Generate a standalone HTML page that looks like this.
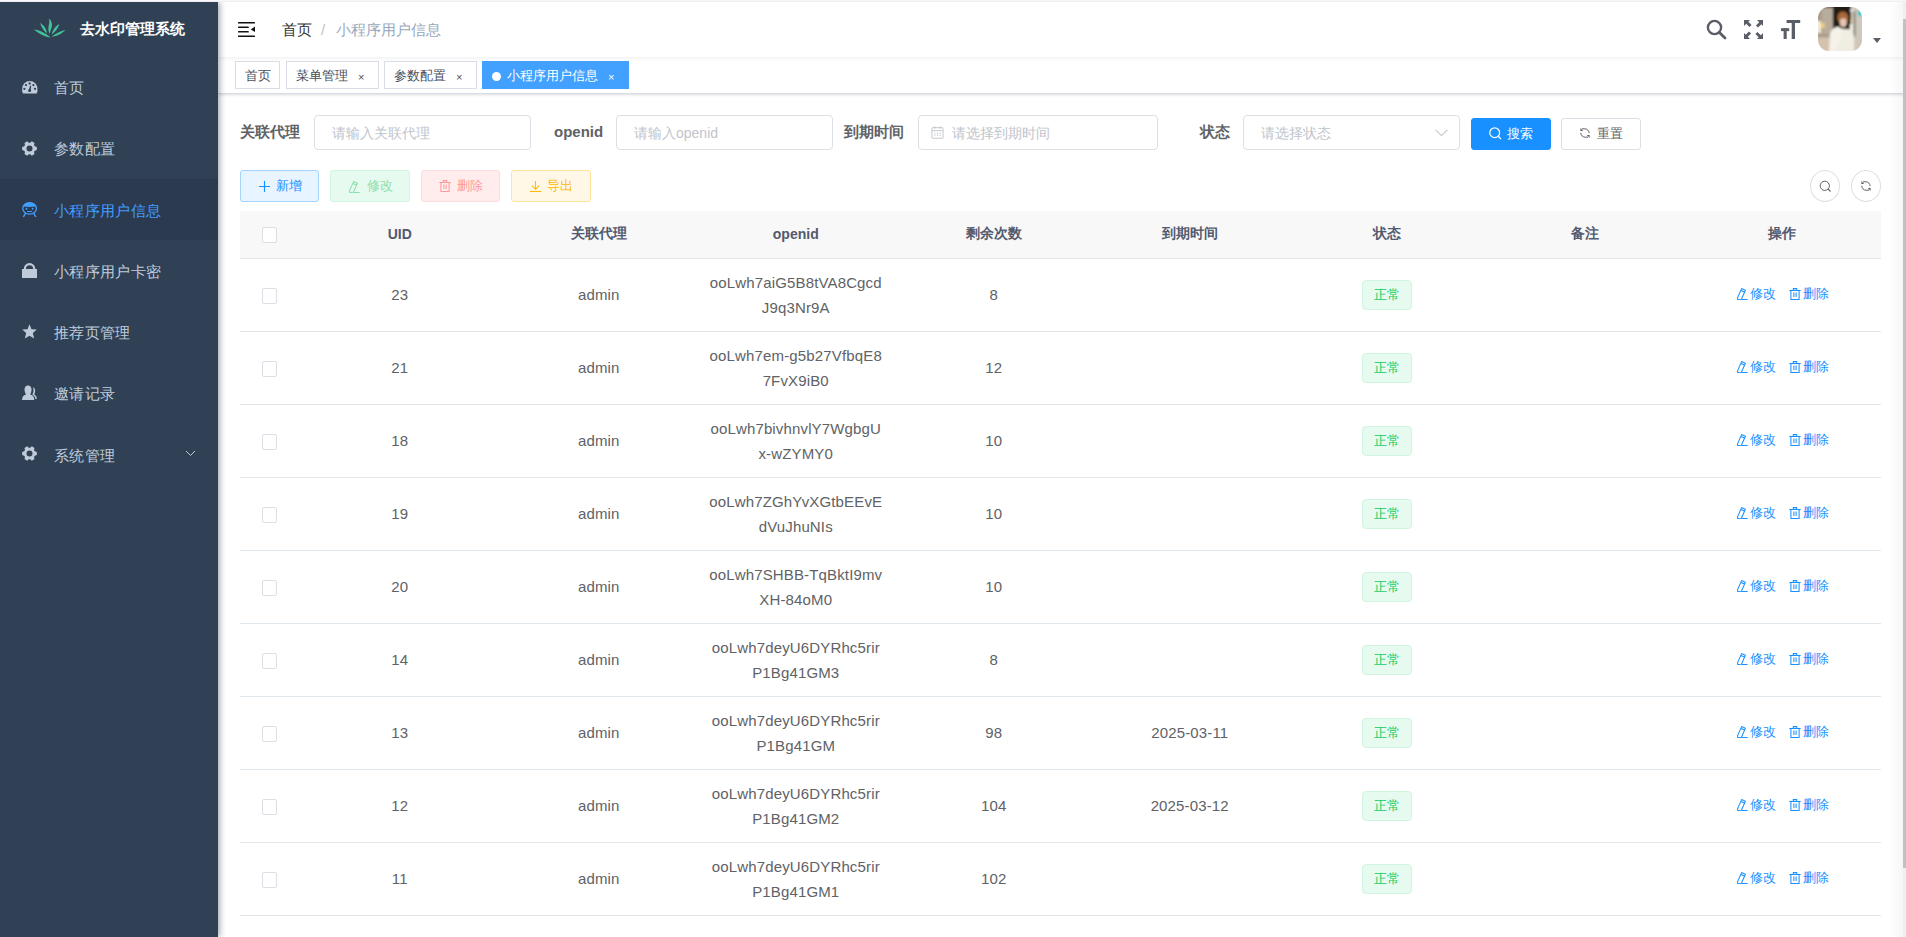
<!DOCTYPE html>
<html><head><meta charset="utf-8">
<style>
*{box-sizing:border-box;margin:0;padding:0}
html,body{width:1906px;height:937px;overflow:hidden;background:#fff;font-family:"Liberation Sans",sans-serif;color:#606266}
.abs{position:absolute}
svg{display:block}
#topstrip{left:0;top:0;width:1906px;height:2px;background:#f7f7f9;border-bottom:1px solid #f0f0f4;z-index:10}
#sidebar{left:0;top:2px;width:218px;height:935px;background:#304156;box-shadow:2px 0 6px rgba(0,21,41,.35);z-index:5}
#logo{left:34px;top:16px}
#title{left:80px;top:17px;font-size:15px;font-weight:bold;color:#fff;line-height:20px;white-space:nowrap}
.mi{position:absolute;left:0;width:218px;height:61px}
.mi.active{background:#2c3a50}
.mi svg{position:absolute;left:22px}
.mi .tx{position:absolute;left:54px;top:21.5px;font-size:15px;letter-spacing:.35px;line-height:20px;color:#bfcbd9;white-space:nowrap}
.mi.active .tx{color:#409eff}
#navbar{left:218px;top:2px;width:1688px;height:55px;background:#fff;box-shadow:0 1px 4px rgba(0,21,41,.08);z-index:3}
#tags{left:218px;top:57px;width:1688px;height:37px;background:#fff;border-bottom:1px solid #d8dce5;box-shadow:0 1px 3px 0 rgba(0,0,0,.12),0 0 3px 0 rgba(0,0,0,.04);z-index:2}
.tag{position:absolute;top:4px;height:28px;border:1px solid #d8dce5;background:#fff;color:#495060;font-size:13px;line-height:28px;padding-left:9px;white-space:nowrap}
.tag .x{position:absolute;top:1px;font-size:11px;line-height:28px;color:#495060}
.tag.on{background:#42a0ff;border-color:#42a0ff;color:#fff}
.tag.on .x{color:#fff}
.dot{position:absolute;left:9px;top:10px;width:9px;height:9px;border-radius:50%;background:#fff}
.bc{position:absolute;top:17.5px;font-size:15px;line-height:20px;white-space:nowrap}
.lbl{position:absolute;top:122px;font-size:15px;font-weight:bold;color:#606266;line-height:20px;white-space:nowrap}
.inp{position:absolute;top:115px;height:35px;border:1px solid #dcdfe6;border-radius:4px;background:#fff}
.ph{position:absolute;font-size:14px;color:#c0c4cc;line-height:20px;top:7px;white-space:nowrap}
.btn{position:absolute;height:32px;border-radius:3px;font-size:13px;line-height:30px;white-space:nowrap;border:1px solid}
.btn svg{position:absolute}
.btn span{position:absolute;top:0}
.circ{position:absolute;top:170px;width:30px;height:32px;border:1px solid #dcdfe6;border-radius:50%;background:#fff}
.circ svg{position:absolute;left:8px;top:9px}
table{position:absolute;left:240px;top:211px;width:1641px;border-collapse:collapse;table-layout:fixed}
th{height:47px;background:#f8f8f9;color:#515a6e;font-size:14px;font-weight:bold;border-bottom:1px solid #dfe6ec;text-align:center;padding:0}
td{height:73px;border-bottom:1px solid #dfe6ec;text-align:center;font-size:15px;letter-spacing:.15px;color:#606266;line-height:25px;padding:0}
th:nth-child(3),td:nth-child(3){padding-left:3px}th:nth-child(4),td:nth-child(4){padding-left:2px}th:nth-child(5),td:nth-child(5){padding-left:3px}
.cb{display:inline-block;width:15.5px;height:15.5px;border:1px solid #dcdfe6;border-radius:2px;background:#fff;vertical-align:middle;position:relative;left:-1px}
.st{display:inline-block;width:50px;height:30px;border:1px solid #d0f5de;background:#e7faf0;color:#13ce66;border-radius:4px;font-size:13px;line-height:28px;vertical-align:middle}
.op{color:#1890ff;font-size:13px;white-space:nowrap;position:relative;top:-1.5px;left:1px}
.op svg{display:inline-block;vertical-align:-2px;margin-right:2px}
.op2{margin-left:13px}
#sb{left:1903px;top:19px;width:3px;height:849px;background:#c1c1c1;z-index:9}
</style></head><body>
<div id="topstrip" class="abs"></div>

<div id="sidebar" class="abs">
  <svg id="logo" class="abs" width="32" height="21" viewBox="0 0 32 21" style="top:16px"><path fill="#44c097" d="M14.8 0.5 C17.5 2.5 18.8 6 17.5 10 C16.8 12.5 15.8 14.5 15.4 15.9 C14.6 13.5 14 11 14.6 8 C15.2 5 15.8 3 14.8 0.5 Z M6.1 5.1 C9.5 7 12.5 10.5 13.1 15.4 C10.5 13.5 8.5 11 7.5 8.5 C7 7.3 6.6 6.2 6.1 5.1Z M25.3 6 C24.5 9 22.5 13 17.6 16.5 C18.3 13.5 19.8 11 21.5 9 C22.7 7.7 24 6.6 25.3 6Z M0.1 11.4 C5 11.8 12 15 16.7 19.6 C11 18.6 6 16.5 2.5 13.5 C1.6 12.7 0.8 12 0.1 11.4Z M31.4 12.1 C28 15.8 22.5 18.5 17.6 18.8 C21 16 25 13.8 28.5 12.7 C29.5 12.4 30.5 12.2 31.4 12.1Z"/></svg>
  <div id="title" class="abs">去水印管理系统</div>

  <div class="mi" style="top:54.69px">
    <svg style="top:24.7px" width="16" height="13" viewBox="0 0 16 13"><path fill="#bfcbd9" d="M1 12.5 L0.2 10.5 V7.7 A7.6 7.6 0 0 1 15.4 7.7 V10.5 L14.6 12.5 Z"/><g fill="#304156"><circle cx="2.4" cy="7.8" r="1.15"/><circle cx="4" cy="4.1" r="1.15"/><circle cx="7.7" cy="2.5" r="1.15"/><circle cx="11.4" cy="4.1" r="1.15"/><circle cx="13" cy="7.8" r="1.15"/><path d="M6.6 9.5 L8.2 4.6 L9.2 4.9 L8.6 9.8 Z"/><circle cx="7.6" cy="9.6" r="1.5"/></g></svg>
    <div class="tx">首页</div></div>

  <div class="mi" style="top:115.94px">
    <svg style="top:23.06px" width="15" height="15" viewBox="0 0 15 15"><path fill="#bfcbd9" fill-rule="evenodd" d="M14.84 9.06 L14.84 5.94 L12.78 5.36 L11.99 3.99 L12.52 1.93 L9.82 0.37 L8.29 1.86 L6.71 1.86 L5.18 0.37 L2.48 1.93 L3.01 3.99 L2.22 5.36 L0.16 5.94 L0.16 9.06 L2.22 9.64 L3.01 11.01 L2.48 13.07 L5.18 14.63 L6.71 13.14 L8.29 13.14 L9.82 14.63 L12.52 13.07 L11.99 11.01 L12.78 9.64Z M7.5 4.5 A3 3 0 1 0 7.5 10.5 A3 3 0 1 0 7.5 4.5Z"/></svg>
    <div class="tx">参数配置</div></div>

  <div class="mi active" style="top:177.19px">
    <svg style="top:22.7px" width="15" height="15" viewBox="0 0 15 15"><ellipse cx="7.6" cy="6.4" rx="6.8" ry="5.7" fill="none" stroke="#409eff" stroke-width="1.3"/><path fill="#409eff" d="M1.1 4.5 A6.8 5.7 0 0 1 14.1 4.5 Q7.6 5.3 1.1 4.5Z"/><circle cx="4.5" cy="6.7" r="0.95" fill="#409eff"/><circle cx="10.6" cy="6.7" r="0.95" fill="#409eff"/><rect x="5" y="9" width="5.2" height="1.1" rx="0.5" fill="#409eff"/><path d="M3.3 11.6 L1.6 14.6 M11.9 11.6 L13.6 14.6" stroke="#409eff" stroke-width="1.4" stroke-linecap="round"/></svg>
    <div class="tx">小程序用户信息</div></div>

  <div class="mi" style="top:238.44px">
    <svg style="top:22.46px" width="15" height="15" viewBox="0 0 15 15"><path fill="none" stroke="#bfcbd9" stroke-width="2.2" d="M2.9 7 V5.8 A4.65 4.65 0 0 1 12.2 5.8 V7"/><rect x="0" y="6" width="15" height="9" fill="#bfcbd9"/></svg>
    <div class="tx">小程序用户卡密</div></div>

  <div class="mi" style="top:299.69px">
    <svg style="top:22.2px" width="15" height="15" viewBox="0 0 15 15"><path fill="#bfcbd9" d="M7.5 0.3 L9.5 5.2 L14.8 5.6 L10.8 9 L12.2 14.6 L7.5 11.8 L2.8 14.6 L4.2 9 L0.2 5.6 L5.5 5.2 Z"/></svg>
    <div class="tx">推荐页管理</div></div>

  <div class="mi" style="top:360.94px">
    <svg style="top:21.96px" width="15" height="15" viewBox="0 0 15 15"><path fill="#bfcbd9" d="M6 0.5 C8.6 0.5 9.8 2.8 9.5 5.5 C9.3 7.3 8.6 8.6 8.3 9.6 C11 10.3 12.2 12 12.3 15 H0 C0.2 12 1.4 10.3 4 9.6 C3.5 8.6 2.8 7.3 2.6 5.5 C2.3 2.8 3.5 0.5 6 0.5 Z"/><path fill="#bfcbd9" d="M10.8 2.3 C12.6 2.6 13.4 4.3 13.1 6.4 C13 7.6 12.4 8.6 12.2 9.5 C13.9 10.3 14.8 11.8 14.8 14 H13.4 C13.2 12 12.3 10.6 10.3 9.8 C10.7 8.8 11.4 7.5 11.5 5.7 C11.6 4.2 11.3 3 10.8 2.3 Z"/></svg>
    <div class="tx">邀请记录</div></div>

  <div class="mi" style="top:422.19px">
    <svg style="top:21.9px" width="15" height="15" viewBox="0 0 15 15"><path fill="#bfcbd9" fill-rule="evenodd" d="M14.84 9.06 L14.84 5.94 L12.78 5.36 L11.99 3.99 L12.52 1.93 L9.82 0.37 L8.29 1.86 L6.71 1.86 L5.18 0.37 L2.48 1.93 L3.01 3.99 L2.22 5.36 L0.16 5.94 L0.16 9.06 L2.22 9.64 L3.01 11.01 L2.48 13.07 L5.18 14.63 L6.71 13.14 L8.29 13.14 L9.82 14.63 L12.52 13.07 L11.99 11.01 L12.78 9.64Z M7.5 4.5 A3 3 0 1 0 7.5 10.5 A3 3 0 1 0 7.5 4.5Z"/></svg>
    <div class="tx">系统管理</div>
    <svg style="left:185px;top:26px" width="11" height="7" viewBox="0 0 10 7"><path d="M0.5 1 L5 5.5 L9.5 1" fill="none" stroke="#bfcbd9" stroke-width="1"/></svg>
  </div>
</div>

<div id="navbar" class="abs">
  <svg class="abs" style="left:20px;top:19.7px" width="17" height="16" viewBox="0 0 17 16"><g fill="#111"><rect x="0" y="0" width="17" height="1.6" rx="0.6"/><rect x="0" y="4.4" width="10.8" height="1.7" rx="0.6"/><rect x="0" y="9" width="10.8" height="1.6" rx="0.6"/><rect x="0" y="13.4" width="17" height="1.7" rx="0.6"/><path d="M17 4.5 L12.8 7.4 L17 10.1 Z"/></g></svg>
  <div class="bc" style="left:64px;color:#303133">首页</div>
  <div class="bc" style="left:103px;color:#c0c4cc">/</div>
  <div class="bc" style="left:118px;color:#97a8be">小程序用户信息</div>

  <svg class="abs" style="left:1488px;top:17px" width="21" height="21" viewBox="0 0 21 21"><circle cx="8.5" cy="8.5" r="6.6" fill="none" stroke="#5a5e66" stroke-width="2.4"/><path d="M13.2 13.2 L19 19" stroke="#5a5e66" stroke-width="2.8" stroke-linecap="round"/></svg>
  <svg class="abs" style="left:1526px;top:18px" width="19" height="19" viewBox="0 0 19 19"><g fill="#5a5e66"><path d="M0 0 H6 L4.3 1.7 L7.6 5 L5.5 7.1 L2.2 3.8 L0 6 Z"/><path d="M19 0 V6 L17.3 4.3 L14 7.6 L11.9 5.5 L15.2 2.2 L13 0 Z"/><path d="M0 19 V13 L1.7 14.7 L5 11.4 L7.1 13.5 L3.8 16.8 L6 19 Z"/><path d="M19 19 H13 L14.7 17.3 L11.4 14 L13.5 11.9 L16.8 15.2 L19 13 Z"/></g></svg>
  <svg class="abs" style="left:1563px;top:18px" width="20" height="20" viewBox="0 0 20 20"><g fill="#5a5e66"><rect x="5.6" y="0" width="13.6" height="3"/><rect x="10.7" y="0" width="3.3" height="19"/><rect x="0" y="8.2" width="8.2" height="2.9"/><rect x="2.6" y="8.2" width="3.1" height="10.8"/></g></svg>

  <svg class="abs" style="left:1600px;top:5px" width="44" height="44" viewBox="0 0 44 44">
    <defs><clipPath id="av"><rect x="0" y="0" width="44" height="44" rx="11"/></clipPath><filter id="bl" x="-20%" y="-20%" width="140%" height="140%"><feGaussianBlur stdDeviation="0.9"/></filter></defs>
    <g clip-path="url(#av)"><g filter="url(#bl)">
      <rect x="-4" y="-4" width="52" height="52" fill="#cbbba8"/>
      <rect x="-4" y="-4" width="20" height="34" fill="#a99c8a"/><rect x="-4" y="-4" width="20" height="5" fill="#5a4a3c"/>
      <rect x="4" y="1" width="10" height="26" fill="#b8ad9c"/>
      <rect x="-4" y="14" width="7" height="12" fill="#f2ead8"/>
      <rect x="3" y="16" width="4" height="5" fill="#e9c979"/>
      <rect x="15" y="-4" width="19" height="26" fill="#221b14"/>
      <rect x="33" y="-4" width="15" height="36" fill="#cfc9bd"/>
      <rect x="35" y="4" width="3" height="26" fill="#9f998d"/>
      <rect x="40" y="3" width="5" height="6" fill="#3cc6cf"/>
      <circle cx="33.5" cy="3.5" r="1.3" fill="#fff"/>
      <circle cx="33.5" cy="14" r="1.2" fill="#f3e3a8"/>
      <rect x="32" y="17" width="3" height="7" fill="#f4f1ea"/>
      <ellipse cx="24.8" cy="10.5" rx="5.4" ry="6" fill="#a9683a"/>
      <ellipse cx="25.3" cy="15.6" rx="3.5" ry="4.4" fill="#e6c6b3"/>
      <path d="M11 46 L12 27 Q14 21 19 20 L22 21 Q27 23 33 23 Q36 25 36 32 L36 46 Z" fill="#f0ede2"/>
      <path d="M11 46 L12 27 Q14 20 21 20 L25 24 L22 34 L16 46 Z" fill="#f5f2ea"/>
      <rect x="-4" y="32" width="15" height="14" fill="#d4c2ad"/>
      <rect x="36" y="32" width="12" height="14" fill="#d2c6b6"/>
    </g></g>
  </svg>
  <svg class="abs" style="left:1655px;top:36px" width="8" height="5" viewBox="0 0 8 5"><path d="M0 0 H8 L4 5 Z" fill="#5a5e66"/></svg>
</div>

<div id="tags" class="abs">
  <div class="tag" style="left:17px;width:45px">首页</div>
  <div class="tag" style="left:68px;width:93px">菜单管理<span class="x" style="left:71px">×</span></div>
  <div class="tag" style="left:166px;width:93px">参数配置<span class="x" style="left:71px">×</span></div>
  <div class="tag on" style="left:264px;width:147px;padding-left:24px"><span class="dot"></span>小程序用户信息<span class="x" style="left:125px">×</span></div>
</div>

<div class="lbl" style="left:240px">关联代理</div>
<div class="inp" style="left:314px;width:217px"><div class="ph" style="left:17px">请输入关联代理</div></div>
<div class="lbl" style="left:554px">openid</div>
<div class="inp" style="left:616px;width:217px"><div class="ph" style="left:17px">请输入openid</div></div>
<div class="lbl" style="left:844px">到期时间</div>
<div class="inp" style="left:918px;width:240px">
  <svg class="abs" style="left:12px;top:10px" width="13" height="13" viewBox="0 0 14 14"><g fill="none" stroke="#c0c4cc" stroke-width="1"><rect x="1" y="1.8" width="12" height="11.4" rx="0.6"/><path d="M1 5 H13 M4.2 0.5 V3 M9.8 0.5 V3"/></g><g fill="#c0c4cc"><rect x="3.3" y="7.2" width="1.4" height="1"/><rect x="6.3" y="7.2" width="1.4" height="1"/><rect x="9.3" y="7.2" width="1.4" height="1"/><rect x="3.3" y="9.4" width="1.4" height="1"/><rect x="6.3" y="9.4" width="1.4" height="1"/><rect x="9.3" y="9.4" width="1.4" height="1"/></g></svg>
  <div class="ph" style="left:33px">请选择到期时间</div></div>
<div class="lbl" style="left:1200px">状态</div>
<div class="inp" style="left:1243px;width:217px"><div class="ph" style="left:17px">请选择状态</div>
  <svg class="abs" style="left:191px;top:13px" width="13" height="8" viewBox="0 0 13 8"><path d="M0.6 0.8 L6.5 6.6 L12.4 0.8" fill="none" stroke="#c0c4cc" stroke-width="1.1"/></svg></div>

<div class="btn" style="left:1471px;top:118px;width:80px;background:#1890ff;border-color:#1890ff;color:#fff">
  <svg style="left:17px;top:8px" width="13" height="13" viewBox="0 0 13 13"><circle cx="5.7" cy="5.7" r="4.9" fill="none" stroke="#fff" stroke-width="1.2"/><path d="M9.2 9.2 L12 12" stroke="#fff" stroke-width="1.3"/></svg>
  <span style="left:35px">搜索</span></div>
<div class="btn" style="left:1561px;top:118px;width:80px;background:#fff;border-color:#dcdfe6;color:#606266">
  <svg style="left:18px;top:9px" width="10" height="10" viewBox="0 0 10 10"><g fill="none" stroke="#606266" stroke-width="1"><path d="M2 0.8 H4.8 A4.3 4.3 0 0 1 9.1 5.1"/><path d="M0.8 4.9 A4.3 4.3 0 0 0 5.1 9.2 H8"/></g><path d="M0.4 0 V3 H3.2 Z M9.6 10 V7 H6.8 Z" fill="#606266"/></svg>
  <span style="left:35px">重置</span></div>

<div class="btn" style="left:240px;top:170px;width:79px;background:#e8f4ff;border-color:#a3d3ff;color:#1890ff">
  <svg style="left:18px;top:10px" width="11" height="11" viewBox="0 0 11 11"><path d="M5.5 0 V11 M0 5.5 H11" stroke="#1890ff" stroke-width="1.1"/></svg>
  <span style="left:35px">新增</span></div>
<div class="btn" style="left:330px;top:170px;width:80px;background:#e7faf0;border-color:#d0f5e0;color:#89e0ad">
  <svg style="left:18px;top:10px" width="11" height="12" viewBox="0 0 11 12"><path d="M0.6 11.4 L0.6 9.6 L4.6 0.6 L8.4 2.3 L4.4 11.2 Z M3.9 2.4 L7.6 4.1 M4.8 11.4 H10.6" fill="none" stroke="#89e0ad" stroke-width="1.05" stroke-linejoin="round"/></svg>
  <span style="left:36px">修改</span></div>
<div class="btn" style="left:421px;top:170px;width:79px;background:#ffeded;border-color:#ffdbdb;color:#ff9a9a">
  <svg style="left:17px;top:9px" width="12" height="12" viewBox="0 0 12 12"><path d="M0.3 2.4 H11.7 M4.3 2.4 V0.6 H7.7 V2.4 M1.9 2.4 V11.4 H10.1 V2.4 M4.9 4.6 V9 M7.1 4.6 V9" fill="none" stroke="#ff9a9a" stroke-width="1.05"/></svg>
  <span style="left:35px">删除</span></div>
<div class="btn" style="left:511px;top:170px;width:80px;background:#fff8e6;border-color:#ffe399;color:#ffba00">
  <svg style="left:18px;top:10px" width="11" height="11" viewBox="0 0 11 11"><path d="M5.5 0 V8 M1.8 4.6 L5.5 8.3 L9.2 4.6 M0 10.5 H11" fill="none" stroke="#ffba00" stroke-width="1.1"/></svg>
  <span style="left:35px">导出</span></div>

<div class="circ" style="left:1810px"><svg width="13" height="13" viewBox="0 0 13 13"><circle cx="5.8" cy="5.8" r="4.6" fill="none" stroke="#606266" stroke-width="1"/><path d="M9.2 9.2 L11.5 11.5" stroke="#606266" stroke-width="1.1"/></svg></div>
<div class="circ" style="left:1851px"><svg style="left:9px;top:10px" width="10" height="10" viewBox="0 0 10 10"><g fill="none" stroke="#606266" stroke-width="1"><path d="M2 0.8 H4.8 A4.3 4.3 0 0 1 9.1 5.1"/><path d="M0.8 4.9 A4.3 4.3 0 0 0 5.1 9.2 H8"/></g><path d="M0.4 0 V3 H3.2 Z M9.6 10 V7 H6.8 Z" fill="#606266"/></svg></div>

<table>
<colgroup><col style="width:61px"><col><col><col><col><col><col><col><col></colgroup>
<thead><tr><th><span class="cb"></span></th><th>UID</th><th>关联代理</th><th>openid</th><th>剩余次数</th><th>到期时间</th><th>状态</th><th>备注</th><th>操作</th></tr></thead>
<tbody>
<tr><td><span class="cb"></span></td><td>23</td><td>admin</td><td>ooLwh7aiG5B8tVA8Cgcd<br>J9q3Nr9A</td><td>8</td><td></td><td><span class="st">正常</span></td><td></td><td class="ops"><span class="op"><svg class="opi" viewBox="0 0 11 12" width="11" height="12"><path d="M0.6 11.4 L0.6 9.6 L4.6 0.6 L8.4 2.3 L4.4 11.2 Z M3.9 2.4 L7.6 4.1 M4.8 11.4 H10.6" fill="none" stroke="currentColor" stroke-width="1.05" stroke-linejoin="round"/></svg>修改</span><span class="op op2"><svg class="opi" viewBox="0 0 12 12" width="12" height="12"><path d="M0.3 2.4 H11.7 M4.3 2.4 V0.6 H7.7 V2.4 M1.9 2.4 V11.4 H10.1 V2.4 M4.9 4.6 V9 M7.1 4.6 V9" fill="none" stroke="currentColor" stroke-width="1.05"/></svg>删除</span></td></tr>
<tr><td><span class="cb"></span></td><td>21</td><td>admin</td><td>ooLwh7em-g5b27VfbqE8<br>7FvX9iB0</td><td>12</td><td></td><td><span class="st">正常</span></td><td></td><td class="ops"><span class="op"><svg class="opi" viewBox="0 0 11 12" width="11" height="12"><path d="M0.6 11.4 L0.6 9.6 L4.6 0.6 L8.4 2.3 L4.4 11.2 Z M3.9 2.4 L7.6 4.1 M4.8 11.4 H10.6" fill="none" stroke="currentColor" stroke-width="1.05" stroke-linejoin="round"/></svg>修改</span><span class="op op2"><svg class="opi" viewBox="0 0 12 12" width="12" height="12"><path d="M0.3 2.4 H11.7 M4.3 2.4 V0.6 H7.7 V2.4 M1.9 2.4 V11.4 H10.1 V2.4 M4.9 4.6 V9 M7.1 4.6 V9" fill="none" stroke="currentColor" stroke-width="1.05"/></svg>删除</span></td></tr>
<tr><td><span class="cb"></span></td><td>18</td><td>admin</td><td>ooLwh7bivhnvlY7WgbgU<br>x-wZYMY0</td><td>10</td><td></td><td><span class="st">正常</span></td><td></td><td class="ops"><span class="op"><svg class="opi" viewBox="0 0 11 12" width="11" height="12"><path d="M0.6 11.4 L0.6 9.6 L4.6 0.6 L8.4 2.3 L4.4 11.2 Z M3.9 2.4 L7.6 4.1 M4.8 11.4 H10.6" fill="none" stroke="currentColor" stroke-width="1.05" stroke-linejoin="round"/></svg>修改</span><span class="op op2"><svg class="opi" viewBox="0 0 12 12" width="12" height="12"><path d="M0.3 2.4 H11.7 M4.3 2.4 V0.6 H7.7 V2.4 M1.9 2.4 V11.4 H10.1 V2.4 M4.9 4.6 V9 M7.1 4.6 V9" fill="none" stroke="currentColor" stroke-width="1.05"/></svg>删除</span></td></tr>
<tr><td><span class="cb"></span></td><td>19</td><td>admin</td><td>ooLwh7ZGhYvXGtbEEvE<br>dVuJhuNIs</td><td>10</td><td></td><td><span class="st">正常</span></td><td></td><td class="ops"><span class="op"><svg class="opi" viewBox="0 0 11 12" width="11" height="12"><path d="M0.6 11.4 L0.6 9.6 L4.6 0.6 L8.4 2.3 L4.4 11.2 Z M3.9 2.4 L7.6 4.1 M4.8 11.4 H10.6" fill="none" stroke="currentColor" stroke-width="1.05" stroke-linejoin="round"/></svg>修改</span><span class="op op2"><svg class="opi" viewBox="0 0 12 12" width="12" height="12"><path d="M0.3 2.4 H11.7 M4.3 2.4 V0.6 H7.7 V2.4 M1.9 2.4 V11.4 H10.1 V2.4 M4.9 4.6 V9 M7.1 4.6 V9" fill="none" stroke="currentColor" stroke-width="1.05"/></svg>删除</span></td></tr>
<tr><td><span class="cb"></span></td><td>20</td><td>admin</td><td>ooLwh7SHBB-TqBktI9mv<br>XH-84oM0</td><td>10</td><td></td><td><span class="st">正常</span></td><td></td><td class="ops"><span class="op"><svg class="opi" viewBox="0 0 11 12" width="11" height="12"><path d="M0.6 11.4 L0.6 9.6 L4.6 0.6 L8.4 2.3 L4.4 11.2 Z M3.9 2.4 L7.6 4.1 M4.8 11.4 H10.6" fill="none" stroke="currentColor" stroke-width="1.05" stroke-linejoin="round"/></svg>修改</span><span class="op op2"><svg class="opi" viewBox="0 0 12 12" width="12" height="12"><path d="M0.3 2.4 H11.7 M4.3 2.4 V0.6 H7.7 V2.4 M1.9 2.4 V11.4 H10.1 V2.4 M4.9 4.6 V9 M7.1 4.6 V9" fill="none" stroke="currentColor" stroke-width="1.05"/></svg>删除</span></td></tr>
<tr><td><span class="cb"></span></td><td>14</td><td>admin</td><td>ooLwh7deyU6DYRhc5rir<br>P1Bg41GM3</td><td>8</td><td></td><td><span class="st">正常</span></td><td></td><td class="ops"><span class="op"><svg class="opi" viewBox="0 0 11 12" width="11" height="12"><path d="M0.6 11.4 L0.6 9.6 L4.6 0.6 L8.4 2.3 L4.4 11.2 Z M3.9 2.4 L7.6 4.1 M4.8 11.4 H10.6" fill="none" stroke="currentColor" stroke-width="1.05" stroke-linejoin="round"/></svg>修改</span><span class="op op2"><svg class="opi" viewBox="0 0 12 12" width="12" height="12"><path d="M0.3 2.4 H11.7 M4.3 2.4 V0.6 H7.7 V2.4 M1.9 2.4 V11.4 H10.1 V2.4 M4.9 4.6 V9 M7.1 4.6 V9" fill="none" stroke="currentColor" stroke-width="1.05"/></svg>删除</span></td></tr>
<tr><td><span class="cb"></span></td><td>13</td><td>admin</td><td>ooLwh7deyU6DYRhc5rir<br>P1Bg41GM</td><td>98</td><td>2025-03-11</td><td><span class="st">正常</span></td><td></td><td class="ops"><span class="op"><svg class="opi" viewBox="0 0 11 12" width="11" height="12"><path d="M0.6 11.4 L0.6 9.6 L4.6 0.6 L8.4 2.3 L4.4 11.2 Z M3.9 2.4 L7.6 4.1 M4.8 11.4 H10.6" fill="none" stroke="currentColor" stroke-width="1.05" stroke-linejoin="round"/></svg>修改</span><span class="op op2"><svg class="opi" viewBox="0 0 12 12" width="12" height="12"><path d="M0.3 2.4 H11.7 M4.3 2.4 V0.6 H7.7 V2.4 M1.9 2.4 V11.4 H10.1 V2.4 M4.9 4.6 V9 M7.1 4.6 V9" fill="none" stroke="currentColor" stroke-width="1.05"/></svg>删除</span></td></tr>
<tr><td><span class="cb"></span></td><td>12</td><td>admin</td><td>ooLwh7deyU6DYRhc5rir<br>P1Bg41GM2</td><td>104</td><td>2025-03-12</td><td><span class="st">正常</span></td><td></td><td class="ops"><span class="op"><svg class="opi" viewBox="0 0 11 12" width="11" height="12"><path d="M0.6 11.4 L0.6 9.6 L4.6 0.6 L8.4 2.3 L4.4 11.2 Z M3.9 2.4 L7.6 4.1 M4.8 11.4 H10.6" fill="none" stroke="currentColor" stroke-width="1.05" stroke-linejoin="round"/></svg>修改</span><span class="op op2"><svg class="opi" viewBox="0 0 12 12" width="12" height="12"><path d="M0.3 2.4 H11.7 M4.3 2.4 V0.6 H7.7 V2.4 M1.9 2.4 V11.4 H10.1 V2.4 M4.9 4.6 V9 M7.1 4.6 V9" fill="none" stroke="currentColor" stroke-width="1.05"/></svg>删除</span></td></tr>
<tr><td><span class="cb"></span></td><td>11</td><td>admin</td><td>ooLwh7deyU6DYRhc5rir<br>P1Bg41GM1</td><td>102</td><td></td><td><span class="st">正常</span></td><td></td><td class="ops"><span class="op"><svg class="opi" viewBox="0 0 11 12" width="11" height="12"><path d="M0.6 11.4 L0.6 9.6 L4.6 0.6 L8.4 2.3 L4.4 11.2 Z M3.9 2.4 L7.6 4.1 M4.8 11.4 H10.6" fill="none" stroke="currentColor" stroke-width="1.05" stroke-linejoin="round"/></svg>修改</span><span class="op op2"><svg class="opi" viewBox="0 0 12 12" width="12" height="12"><path d="M0.3 2.4 H11.7 M4.3 2.4 V0.6 H7.7 V2.4 M1.9 2.4 V11.4 H10.1 V2.4 M4.9 4.6 V9 M7.1 4.6 V9" fill="none" stroke="currentColor" stroke-width="1.05"/></svg>删除</span></td></tr>
</tbody>
</table>
<div class="abs" style="left:1889px;top:2px;width:14px;height:935px;background:linear-gradient(90deg,rgba(0,0,0,0),rgba(0,0,0,.035));z-index:8"></div><div class="abs" style="left:1903px;top:0;width:3px;height:937px;background:#efefef;z-index:8"></div><div id="sb" class="abs"></div>
</body></html>
